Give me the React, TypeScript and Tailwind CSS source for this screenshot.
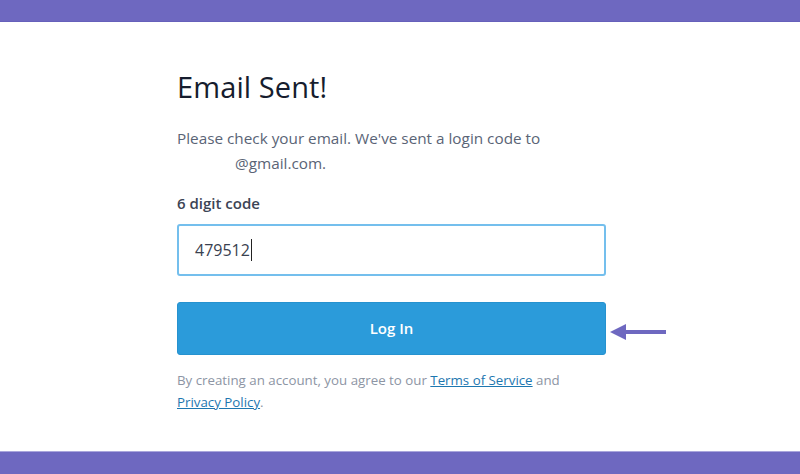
export default function App() {
  return (
    <div className="w-[800px] h-[474px] flex flex-col bg-white" style={{ fontFamily: '"Open Sans", sans-serif' }}>
      <div className="h-[22px] bg-[#6e68c0] border-b border-[#6660bb]" />
      <div className="flex-1 flex flex-col pl-[177px] pt-[47px]">
        <h1 className="text-[29px] leading-[36px] text-[#161d2e] font-normal tracking-[0.1px]">Email Sent!</h1>
        <p className="mt-[21px] text-[15.3px] leading-[25px] text-[#5a6476] w-[390px]">
          Please check your email. We've sent a login code to<br />
          <span className="pl-[58px]">@gmail.com.</span>
        </p>
        <label className="mt-[16px] text-[15px] leading-[22px] font-semibold text-[#3c4455]">6 digit code</label>
        <div className="mt-[10px] w-[429px] h-[52px] border-2 border-[#74bfed] rounded-[3px] flex items-center pl-[16px]">
          <span className="text-[16px] text-[#3a4150]">479512</span>
          <span className="w-px h-[22px] bg-[#222] ml-px" />
        </div>
        <div className="mt-[26px] flex items-center">
          <button className="w-[429px] h-[53px] bg-[#2b9bda] border border-[#2692cf] rounded-[3px] text-white text-[15px] font-semibold">
            Log In
          </button>
          <svg width="60" height="20" viewBox="0 0 60 20" className="ml-[2px] mt-[6px]">
            <rect x="14" y="8" width="44" height="4" fill="#6e68c0" />
            <polygon points="2,10 18,2 18,18" fill="#6e68c0" />
          </svg>
        </div>
        <p className="mt-[14px] text-[13.3px] leading-[22px] text-[#8d95a4] w-[440px]">
          By creating an account, you agree to our{' '}
          <a className="text-[#1d77b0] underline">Terms of Service</a> and<br />
          <a className="text-[#1d77b0] underline">Privacy Policy</a>.
        </p>
      </div>
      <div className="h-[23px] bg-[#6e68c0] border-t border-[#aaa6dc]" />
    </div>
  );
}
